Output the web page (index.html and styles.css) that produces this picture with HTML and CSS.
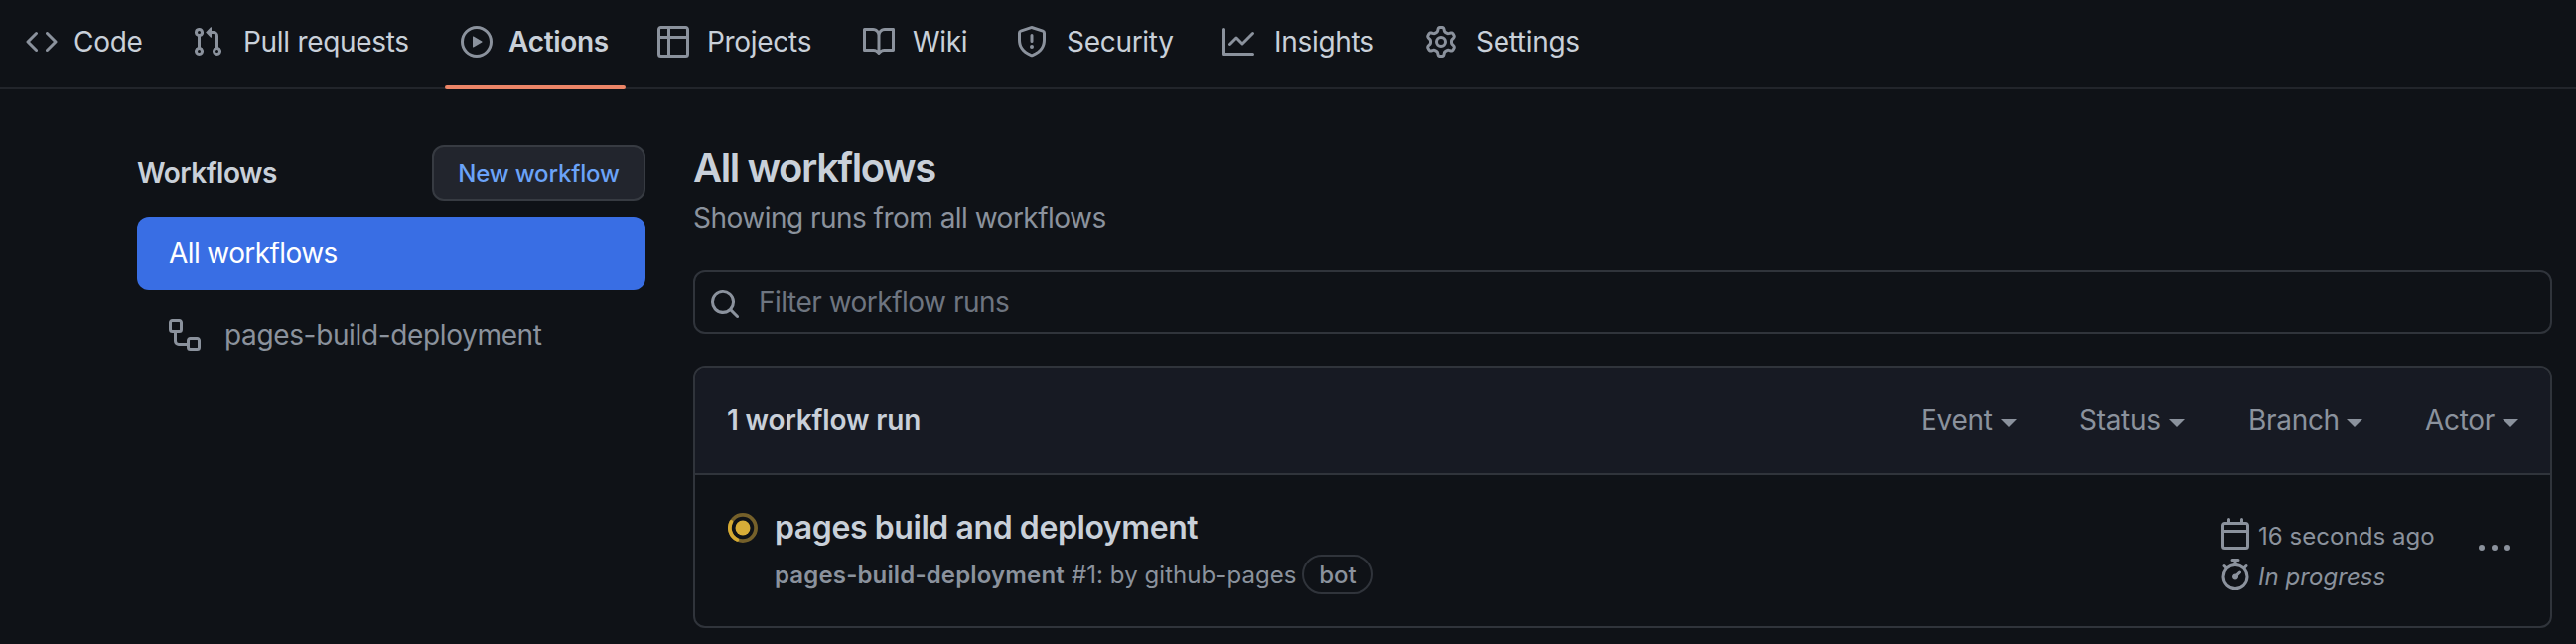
FILE: index.html
```html
<!DOCTYPE html>
<html lang="en">
<head>
<meta charset="utf-8">
<title>Actions</title>
<link rel="stylesheet" href="styles.css">
</head>
<body>
<nav class="tabs">
  <a class="tab tab-code"><svg class="icon" viewBox="0 0 16 16"><path d="m11.28 3.22 4.25 4.25a.75.75 0 0 1 0 1.06l-4.25 4.25a.749.749 0 0 1-1.275-.326.749.749 0 0 1 .215-.734L13.94 8l-3.72-3.72a.749.749 0 0 1 .326-1.275.749.749 0 0 1 .734.215Zm-6.56 0a.751.751 0 0 1 1.042.018.751.751 0 0 1 .018 1.042L2.06 8l3.72 3.72a.749.749 0 0 1-.326 1.275.749.749 0 0 1-.734-.215L.47 8.53a.75.75 0 0 1 0-1.06Z"/></svg><span>Code</span></a>
  <a class="tab tab-pulls"><svg class="icon" viewBox="0 0 16 16"><path d="M1.5 3.25a2.25 2.25 0 1 1 3 2.122v5.256a2.251 2.251 0 1 1-1.5 0V5.372A2.25 2.25 0 0 1 1.5 3.25Zm5.677-.177L9.573.677A.25.25 0 0 1 10 .854V2.5h1A2.5 2.5 0 0 1 13.500 5v5.628a2.251 2.251 0 1 1-1.5 0V5a1 1 0 0 0-1-1h-1v1.646a.25.25 0 0 1-.427.177L7.177 3.427a.25.25 0 0 1 0-.354ZM3.750 2.500a.75.75 0 1 0 0 1.500.75.75 0 0 0 0-1.500Zm0 9.500a.75.75 0 1 0 0 1.500.75.75 0 0 0 0-1.500Zm8.250.750a.75.75 0 1 0 1.500 0 .75.75 0 0 0-1.500 0Z"/></svg><span>Pull requests</span></a>
  <a class="tab tab-actions selected"><svg class="icon" viewBox="0 0 16 16"><path d="M8 0a8 8 0 1 1 0 16A8 8 0 0 1 8 0ZM1.500 8a6.500 6.500 0 1 0 13 0 6.500 6.500 0 0 0-13 0Zm4.879-2.773 4.264 2.559a.25.25 0 0 1 0 .428l-4.264 2.559A.25.25 0 0 1 6 10.559V5.442a.25.25 0 0 1 .379-.215Z"/></svg><span>Actions</span></a>
  <a class="tab tab-projects"><svg class="icon" viewBox="0 0 16 16"><path d="M0 1.750C0 .784.784 0 1.750 0h12.500C15.216 0 16 .784 16 1.750v12.500A1.750 1.750 0 0 1 14.250 16H1.750A1.750 1.750 0 0 1 0 14.250ZM6.500 6.500v8h7.750a.25.25 0 0 0 .25-.25V6.500Zm8-1.500V1.750a.25.25 0 0 0-.25-.25H6.500V5Zm-13 1.500v7.750c0 .138.112.25.25.25H5v-8ZM5 5V1.500H1.750a.25.25 0 0 0-.25.25V5Z"/></svg><span>Projects</span></a>
  <a class="tab tab-wiki"><svg class="icon" viewBox="0 0 16 16"><path d="M0 1.750A.75.75 0 0 1 .75 1h4.253c1.227 0 2.317.59 3 1.501A3.743 3.743 0 0 1 11.006 1h4.245a.75.75 0 0 1 .75.75v10.500a.75.75 0 0 1-.75.75h-4.507a2.250 2.250 0 0 0-1.591.659l-.622.621a.75.75 0 0 1-1.060 0l-.622-.621A2.250 2.250 0 0 0 5.258 13H.75a.75.75 0 0 1-.75-.75Zm7.251 10.324.004-5.073-.002-2.253A2.250 2.250 0 0 0 5.003 2.500H1.500v9h3.757a3.750 3.750 0 0 1 1.994.574ZM8.755 4.750l-.004 7.322a3.752 3.752 0 0 1 1.992-.572H14.500v-9h-3.495a2.250 2.250 0 0 0-2.250 2.250Z"/></svg><span>Wiki</span></a>
  <a class="tab tab-security"><svg class="icon" viewBox="0 0 16 16"><path d="M7.467.133a1.748 1.748 0 0 1 1.066 0l5.250 1.680A1.750 1.750 0 0 1 15 3.480V7c0 1.566-.32 3.182-1.303 4.682-.983 1.498-2.585 2.813-5.032 3.855a1.697 1.697 0 0 1-1.330 0c-2.447-1.042-4.049-2.357-5.032-3.855C1.320 10.182 1 8.566 1 7V3.480a1.750 1.750 0 0 1 1.217-1.667Zm.61 1.429a.25.25 0 0 0-.153 0l-5.250 1.680a.25.25 0 0 0-.174.238V7c0 1.358.275 2.666 1.057 3.860.784 1.194 2.121 2.340 4.366 3.297a.196.196 0 0 0 .154 0c2.245-.956 3.582-2.104 4.366-3.298C13.225 9.666 13.500 8.360 13.500 7V3.480a.251.251 0 0 0-.174-.237l-5.250-1.680ZM8.750 4.750v3a.75.75 0 0 1-1.500 0v-3a.75.75 0 0 1 1.500 0ZM9 10.500a1 1 0 1 1-2 0 1 1 0 0 1 2 0Z"/></svg><span>Security</span></a>
  <a class="tab tab-insights"><svg class="icon" viewBox="0 0 16 16"><path d="M1.500 1.750V13.500h13.750a.75.75 0 0 1 0 1.500H.75a.75.75 0 0 1-.75-.75V1.750a.75.75 0 0 1 1.500 0Zm14.280 2.530-5.250 5.250a.75.75 0 0 1-1.060 0L7 7.060 4.280 9.780a.751.751 0 0 1-1.042-.018.751.751 0 0 1-.018-1.042l3.250-3.250a.75.75 0 0 1 1.060 0L10 7.940l4.720-4.720a.751.751 0 0 1 1.042.018.751.751 0 0 1 .018 1.042Z"/></svg><span>Insights</span></a>
  <a class="tab tab-settings"><svg class="icon" viewBox="0 0 16 16"><path d="M8 0a8.200 8.200 0 0 1 .701.031C9.444.095 9.990.645 10.160 1.290l.288 1.107c.018.066.079.158.212.224.231.114.454.243.668.386.123.082.233.090.299.071l1.103-.303c.644-.176 1.392.021 1.820.630.270.385.506.792.704 1.218.315.675.111 1.422-.364 1.891l-.814.806c-.049.048-.098.147-.088.294.016.257.016.515 0 .772-.010.147.038.246.088.294l.814.806c.475.469.679 1.216.364 1.891a7.977 7.977 0 0 1-.704 1.217c-.428.610-1.176.807-1.820.630l-1.102-.302c-.067-.019-.177-.011-.300.071a5.909 5.909 0 0 1-.668.386c-.133.066-.194.158-.211.224l-.290 1.106c-.168.646-.715 1.196-1.458 1.260a8.006 8.006 0 0 1-1.402 0c-.743-.064-1.289-.614-1.458-1.260l-.289-1.106c-.018-.066-.079-.158-.212-.224a5.738 5.738 0 0 1-.668-.386c-.123-.082-.233-.090-.299-.071l-1.103.303c-.644.176-1.392-.021-1.820-.630a8.120 8.120 0 0 1-.704-1.218c-.315-.675-.111-1.422.363-1.891l.815-.806c.050-.048.098-.147.088-.294a6.214 6.214 0 0 1 0-.772c.010-.147-.038-.246-.088-.294l-.815-.806C.635 6.045.431 5.298.746 4.623a7.920 7.920 0 0 1 .704-1.217c.428-.610 1.176-.807 1.820-.630l1.102.302c.067.019.177.011.300-.071.214-.143.437-.272.668-.386.133-.066.194-.158.211-.224l.290-1.106C6.009.645 6.556.095 7.299.030 7.530.010 7.764 0 8 0Zm-.571 1.525c-.036.003-.108.036-.137.146l-.289 1.105c-.147.561-.549.967-.998 1.189-.173.086-.340.183-.500.290-.417.278-.970.423-1.529.270l-1.103-.303c-.109-.030-.175.016-.195.045-.220.312-.412.644-.573.990-.014.031-.021.110.059.190l.815.806c.411.406.562.957.530 1.456a4.709 4.709 0 0 0 0 .582c.032.499-.119 1.050-.530 1.456l-.815.806c-.081.080-.073.159-.059.190.162.346.353.677.573.989.020.030.085.076.195.046l1.102-.303c.560-.153 1.113-.008 1.530.270.161.107.328.204.501.290.447.222.850.629.997 1.189l.289 1.105c.029.109.101.143.137.146a6.600 6.600 0 0 0 1.142 0c.036-.003.108-.036.137-.146l.289-1.105c.147-.561.549-.967.998-1.189.173-.086.340-.183.500-.290.417-.278.970-.423 1.529-.270l1.103.303c.109.029.175-.016.195-.045.220-.313.411-.644.573-.990.014-.031.021-.110-.059-.190l-.815-.806c-.411-.406-.562-.957-.530-1.456a4.709 4.709 0 0 0 0-.582c-.032-.499.119-1.050.530-1.456l.815-.806c.081-.080.073-.159.059-.190a6.464 6.464 0 0 0-.573-.989c-.020-.030-.085-.076-.195-.046l-1.102.303c-.560.153-1.113.008-1.530-.270a4.440 4.440 0 0 0-.501-.290c-.447-.222-.850-.629-.997-1.189l-.289-1.105c-.029-.110-.101-.143-.137-.146a6.600 6.600 0 0 0-1.142 0ZM11 8a3 3 0 1 1-6 0 3 3 0 0 1 6 0ZM9.500 8a1.500 1.500 0 1 0-3.001.001A1.500 1.500 0 0 0 9.500 8Z"/></svg><span>Settings</span></a>
</nav>
<div class="layout">
  <aside class="sidebar">
    <div class="sidebar-head"><h2 class="sidebar-title">Workflows</h2><button class="btn">New workflow</button></div>
    <a class="side-item current">All workflows</a>
    <a class="side-item"><svg class="icon" viewBox="0 0 16 16"><path d="M0 1.750C0 .784.784 0 1.750 0h3.500C6.216 0 7 .784 7 1.750v3.500A1.750 1.750 0 0 1 5.250 7H4v4a1 1 0 0 0 1 1h4v-1.250C9 9.784 9.784 9 10.750 9h3.500c.966 0 1.750.784 1.750 1.750v3.500A1.750 1.750 0 0 1 14.250 16h-3.500A1.750 1.750 0 0 1 9 14.250v-.75H5A2.500 2.500 0 0 1 2.500 11V7h-.75A1.750 1.750 0 0 1 0 5.250Zm1.750-.25a.25.25 0 0 0-.25.25v3.500c0 .138.112.25.25.25h3.500a.25.25 0 0 0 .25-.25v-3.500a.25.25 0 0 0-.25-.25Zm9 9a.25.25 0 0 0-.25.25v3.500c0 .138.112.25.25.25h3.500a.25.25 0 0 0 .25-.25v-3.500a.25.25 0 0 0-.25-.25Z"/></svg><span class="side-label">pages-build-deployment</span></a>
  </aside>
  <main class="main">
    <h1 class="title">All workflows</h1>
    <p class="subtitle">Showing runs from all workflows</p>
    <div class="search"><svg class="icon" viewBox="0 0 16 16"><path d="M10.680 11.740a6 6 0 0 1-7.922-8.982 6 6 0 0 1 8.982 7.922l3.040 3.040a.749.749 0 0 1-.326 1.275.749.749 0 0 1-.734-.215ZM11.500 7a4.499 4.499 0 1 0-8.997 0A4.499 4.499 0 0 0 11.500 7Z"/></svg><span class="placeholder">Filter workflow runs</span></div>
    <section class="box">
      <header class="box-head">
        <strong class="count">1 workflow run</strong>
        <div class="filters">
          <span class="filter filter-event">Event<i class="caret"></i></span>
          <span class="filter filter-status">Status<i class="caret"></i></span>
          <span class="filter filter-branch">Branch<i class="caret"></i></span>
          <span class="filter filter-actor">Actor<i class="caret"></i></span>
        </div>
      </header>
      <div class="run">
        <svg class="status" viewBox="0 0 16 16"><circle class="status-ring" cx="8" cy="8" r="7"/><path class="status-arc" d="M5 14.320A7 7 0 0 1 1.800 4.760"/><circle class="status-dot" cx="8" cy="8" r="4"/></svg>
        <div class="run-text">
          <div class="run-title">pages build and deployment</div>
          <div class="run-sub"><span class="run-name">pages-build-deployment</span><span class="run-by">#1: by github-pages</span><span class="bot">bot</span></div>
        </div>
        <div class="meta">
          <div class="meta-row"><svg class="meta-icon" viewBox="0 0 14 16"><path d="M3.750 0a.75.75 0 0 1 .75.75V2h5V.75a.75.75 0 0 1 1.500 0V2h1.250c.966 0 1.750.784 1.750 1.750v10.500A1.750 1.750 0 0 1 12.250 16H1.750A1.750 1.750 0 0 1 0 14.250V3.750C0 2.784.784 2 1.750 2H3V.75A.75.75 0 0 1 3.750 0ZM1.500 7.500v6.750c0 .138.112.25.25.25h10.500a.25.25 0 0 0 .25-.25V7.500Zm.25-4a.25.25 0 0 0-.25.25V6h11V3.750a.25.25 0 0 0-.25-.25Z"/></svg><span>16 seconds ago</span></div>
          <div class="meta-row"><svg class="meta-icon" viewBox="1 0 14 16"><path d="M5.750.75A.75.75 0 0 1 6.500 0h3a.75.75 0 0 1 0 1.500h-.75v1l-.001.041a6.724 6.724 0 0 1 3.464 1.435l.007-.006.750-.750a.749.749 0 0 1 1.275.326.749.749 0 0 1-.215.734l-.750.750-.006.007a6.750 6.750 0 1 1-10.548 0L2.720 5.030l-.750-.750a.751.751 0 0 1 .018-1.042.751.751 0 0 1 1.042-.018l.750.750.007.006A6.720 6.720 0 0 1 7.250 2.541V1.500H6.500a.75.75 0 0 1-.75-.75ZM8 14.500a5.250 5.250 0 1 0-.001-10.501A5.250 5.250 0 0 0 8 14.500Zm.389-6.700 1.330-1.330a.75.75 0 1 1 1.061 1.060L9.450 8.861A1.503 1.503 0 0 1 8 10.750a1.499 1.499 0 1 1 .389-2.950Z"/></svg><em>In progress</em></div>
        </div>
        <svg class="dots" viewBox="0 0 16 16"><path d="M8 9a1.500 1.500 0 1 0 0-3 1.500 1.500 0 0 0 0 3ZM1.500 9a1.500 1.500 0 1 0 0-3 1.500 1.500 0 0 0 0 3Zm13 0a1.500 1.500 0 1 0 0-3 1.500 1.500 0 0 0 0 3Z"/></svg>
      </div>
    </section>
  </main>
</div>
</body>
</html>
```
FILE: styles.css
```css
* { box-sizing: border-box; }
body { margin: 0; height: 648px; overflow: hidden; background: #0f1217; color: #c9d0d9; font: 28px/42px Inter, sans-serif; letter-spacing: -0.3px; white-space: nowrap; }
h1, h2, p { margin: 0; }
svg { flex: none; display: block; fill: #8b929d; }
.icon { width: 32px; height: 32px; }

.tabs { display: flex; gap: 16px; height: 90px; padding-left: 10px; border-bottom: 2px solid #22252b; }
.tab { position: relative; display: flex; align-items: center; gap: 18px; height: 84px; padding-left: 16px; }
.tab-code { width: 151px; gap: 16px; }
.tab-pulls { width: 255px; gap: 20px; }
.tab-actions { width: 182px; }
.tab-projects { width: 191px; }
.tab-wiki { width: 138px; }
.tab-security { width: 192px; gap: 19px; }
.tab-insights { width: 188px; gap: 20px; }
.tab-settings { gap: 19px; }
.tab.selected { gap: 16px; font-weight: 600; }
.selected::after { content: ""; position: absolute; left: 0; right: 0; top: 86px; height: 4px; border-radius: 2px; background: #ec8567; }

.layout { display: flex; gap: 48px; padding: 56px 24px 0 138px; }
.sidebar { width: 512px; }
.sidebar-head { display: flex; align-items: center; justify-content: space-between; height: 56px; margin-bottom: 16px; }
.sidebar-title { font-size: 28px; font-weight: 600; letter-spacing: -0.5px; }
.btn { width: 215px; height: 56px; padding: 0; border: 2px solid #373b42; border-radius: 12px; background: #22252d; color: #6ba3f8; font: 500 24px Inter, sans-serif; letter-spacing: -0.15px; }
.side-item { display: flex; align-items: center; gap: 24px; height: 74px; padding-left: 32px; margin-bottom: 8px; border-radius: 12px; color: #8b929d; }
.side-label { letter-spacing: -0.36px; }
.current { background: #396ee4; color: #fff; letter-spacing: -0.6px; }

.main { flex: 1; }
.title { margin-top: -7px; font-size: 40px; line-height: 60px; font-weight: 600; letter-spacing: -1.4px; }
.subtitle { margin-top: -1px; line-height: 42px; color: #8b929d; letter-spacing: -0.52px; }
.search { display: flex; align-items: center; gap: 18px; height: 64px; margin: 32px 0; padding-left: 14px; border: 2px solid #30343b; border-radius: 12px; }
.search .icon { margin-top: 4px; }
.placeholder { color: #6e7580; letter-spacing: -0.5px; }
.box { height: 264px; border: 2px solid #30343b; border-radius: 12px; overflow: hidden; }
.box-head { display: flex; align-items: center; justify-content: space-between; height: 108px; padding: 0 32px; background: #171a23; border-bottom: 2px solid #30343b; }
.count { font-weight: 600; letter-spacing: -0.15px; }
.filters { display: flex; color: #8b929d; }
.filter { display: flex; align-items: center; justify-content: space-between; }
.filter-event { width: 97px; margin-right: 63px; }
.filter-status { width: 106px; margin-right: 64px; }
.filter-branch { width: 115px; margin-right: 63px; }
.filter-actor { width: 94px; }
.caret { margin-top: 6px; border: 8px solid transparent; border-top-color: #8b929d; border-bottom: 0; }

.run { display: flex; padding-left: 33px; }
.status { width: 30px; height: 30px; margin-top: 38px; }
.status-ring { fill: none; stroke: #75602a; stroke-width: 2; }
.status-arc { fill: none; stroke: #d4a932; stroke-width: 2; stroke-linecap: round; }
.status-dot { fill: #d8ad38; }
.run-text { flex: 1; margin: 29px 0 0 17px; }
.run-title { font-size: 32px; line-height: 48px; font-weight: 600; letter-spacing: -0.42px; }
.run-sub { display: flex; align-items: center; height: 40px; margin-top: 3px; color: #8b929d; font-size: 24px; letter-spacing: 0.06px; }
.run-name { width: 299px; font-weight: 600; letter-spacing: 0.15px; }
.run-by { width: 232px; }
.run-name, .run-by { padding-top: 1px; }
.bot { width: 72px; height: 40px; border: 2px solid #30343b; border-radius: 20px; text-align: center; line-height: 37px; font-weight: 500; }
.meta { width: 259px; padding-top: 43px; color: #8b929d; font-size: 24px; letter-spacing: 0.05px; }
.meta-row { display: flex; gap: 9px; height: 41px; line-height: 37px; }
.meta-icon { width: 28px; height: 32px; }
.dots { width: 32px; height: 32px; margin: 58px 40px 0 0; }
```
